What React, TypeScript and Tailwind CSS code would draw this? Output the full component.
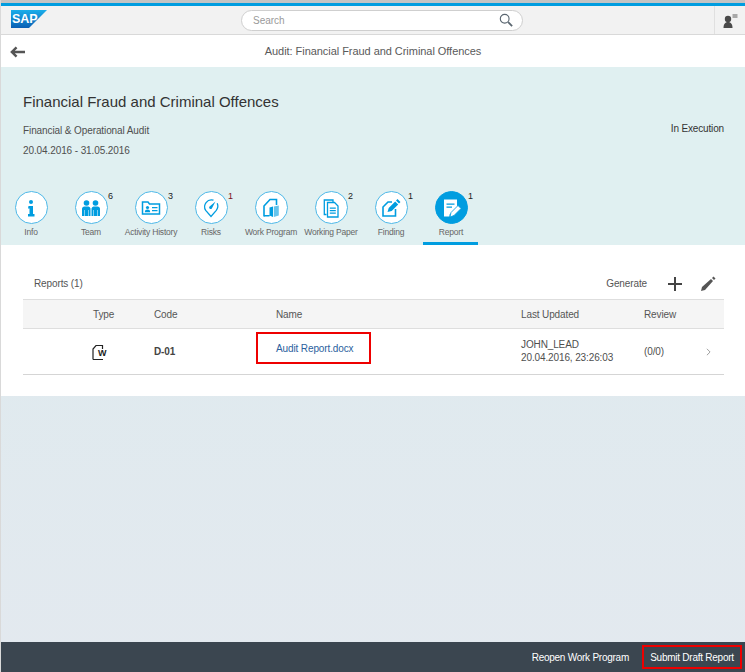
import type { ReactNode } from "react";

const Ring = ({ d, active }: { d: ReactNode; active?: boolean }) => (
  <div
    className={`flex h-[33px] w-[33px] shrink-0 items-center justify-center rounded-full border ${
      active ? "border-[#009de0] bg-[#009de0] text-white" : "border-[#4db8e8] bg-white text-[#009de0]"
    }`}
  >
    <svg viewBox="0 0 20 20" className="h-[20px] w-[20px]" fill="currentColor">
      {d}
    </svg>
  </div>
);

const tabs: { label: string; count?: string; countColor?: string; icon: ReactNode }[] = [
  {
    label: "Info",
    icon: (
      <>
        <circle cx="10" cy="4" r="2" />
        <path d="M7.500 8h4.500v8h1.500v2.500h-6.500V16h1.500v-5.500h-1.500z" />
      </>
    ),
  },
  {
    label: "Team",
    count: "6",
    icon: (
      <>
        <circle cx="5.500" cy="5" r="2.800" />
        <circle cx="14.500" cy="5" r="2.800" />
        <path d="M1 10.500A2.500 2.500 0 0 1 3.500 8.500h4A2.500 2.500 0 0 1 9.500 10.500V18H8v-6h-.5v6h-4v-6H3v6H1zM10.500 10.500a2.500 2.500 0 0 1 2-2h4a2.500 2.500 0 0 1 2.500 2V18h-2v-6h-.5v6h-4v-6H12v6h-1.500z" />
      </>
    ),
  },
  {
    label: "Activity History",
    count: "3",
    icon: (
      <>
        <path d="M1.500 16V4h5.500l1.500 2h10v10z" fill="none" stroke="currentColor" strokeWidth="1.500" />
        <circle cx="6.500" cy="9.500" r="1.600" />
        <path d="M3.800 14.200c0-2 1.200-2.700 2.700-2.700s2.700.7 2.700 2.700zM11 9h5.500v1.300H11zM11 12h5.500v1.300H11z" />
      </>
    ),
  },
  {
    label: "Risks",
    count: "1",
    countColor: "text-[#7a1020]",
    icon: (
      <>
        <path
          d="M12.500 2.200A6.800 6.800 0 0 0 4.700 12.300L10 18.500l5.300-6.200a6.800 6.800 0 0 0 .9-7"
          fill="none"
          stroke="currentColor"
          strokeWidth="1.300"
        />
        <path d="M14.500 3.500L8.300 8.700a1.600 1.600 0 0 0 2.400 2z" />
      </>
    ),
  },
  {
    label: "Work Program",
    icon: (
      <>
        <path d="M3 18.500V8l6-6.500h6.500v5.500" fill="none" stroke="currentColor" strokeWidth="1.600" />
        <path d="M3 18.500V17h5.500v1.500zM8.500 9.500l3.500-1v10.500l-3.500-1.500z" />
        <path d="M12.800 8.500l5-1v10l-5 1.500z" opacity=".6" />
      </>
    ),
  },
  {
    label: "Working Paper",
    count: "2",
    icon: (
      <>
        <path d="M5.500 16.500H3.300V2h8.700v2" fill="none" stroke="currentColor" strokeWidth="1.300" />
        <path d="M6.500 4.500h7l3.500 3.500v11H6.500z" fill="none" stroke="currentColor" strokeWidth="1.300" />
        <path d="M8.800 9.500h6v1.300h-6zM8.800 12h6v1.300h-6zM8.800 14.500h6v1.300h-6z" />
      </>
    ),
  },
  {
    label: "Finding",
    count: "1",
    icon: (
      <>
        <path d="M14.500 11v7H2V9l5-5h4" fill="none" stroke="currentColor" strokeWidth="1.600" />
        <path d="M6.500 14l1.200-4 6.500-6.500 3 3-6.500 6.500zM15 2.500L16.500 1 19.500 4 18 5.500z" />
      </>
    ),
  },
  {
    label: "Report",
    count: "1",
    icon: (
      <>
        <path d="M3 1.500h13v7.500l-7.500 7.500v2H3z" />
        <path d="M5.500 5.500h8v1.200h-8zM5.500 8.500h5.500v1.200H5.500z" fill="#009de0" />
        <path d="M9 19l1-4.500 7-7 3 3-7 7z" stroke="#009de0" strokeWidth="0.800" />
      </>
    ),
  },
];

const gridCols = "grid grid-cols-[61px_122px_245px_123px_1fr] items-center pl-[70px]";

export default function App() {
  return (
    <div
      className="flex h-[672px] w-[745px] flex-col overflow-hidden border-l border-[#d9d9d9] bg-[linear-gradient(#dcebee,#e3e9ef)] text-[#4f4f4f]"
      style={{ fontFamily: '"Liberation Sans", Arial, sans-serif' }}
    >
      <div className="h-[3px] shrink-0 bg-[#c4c4c4]" />
      <div className="h-[3px] shrink-0 bg-[#009de0]" />

      {/* shell bar */}
      <header className="flex h-[29px] shrink-0 items-center border-b border-[#d9d9d9] bg-[#f2f2f2]">
        <div className="mt-[-3px] w-[240px] shrink-0 pl-[10px]">
          <svg viewBox="0 0 36 18" className="h-[18px] w-[36px]">
            <defs>
              <linearGradient id="sapBlue" x1="0" y1="0" x2="0" y2="1">
                <stop offset="0" stopColor="#1aaeea" />
                <stop offset="1" stopColor="#0a5fb4" />
              </linearGradient>
            </defs>
            <path d="M0 0h36L18 18H0z" fill="url(#sapBlue)" />
            <text x="1" y="13" fontSize="12.500" fontWeight="700" fill="#fff" fontFamily="Liberation Sans">
              SAP
            </text>
          </svg>
        </div>
        <div className="flex h-[21px] w-[282px] items-center justify-between rounded-full border border-[#cfcfcf] bg-white pl-[11px] pr-[9px]">
          <span className="text-[10px] text-[#9a9a9a]">Search</span>
          <svg viewBox="0 0 16 16" className="h-[14px] w-[14px]" fill="none" stroke="#5a6670" strokeWidth="1.300">
            <circle cx="6.500" cy="6.500" r="5" />
            <path d="M10.500 10.500l4.500 4.500" strokeWidth="2" />
          </svg>
        </div>
        <div className="ml-auto flex h-full w-[31px] items-center justify-center border-l border-[#e0e0e0]">
          <svg viewBox="0 0 16 16" className="h-[16px] w-[16px]" fill="#4a4a4a">
            <circle cx="6" cy="7" r="3.200" />
            <path d="M1.500 16c0-3.500 1.500-6 4.500-6s4.500 2.500 4.500 6z" />
            <path d="M10.500 2h5v4h-5z" fill="#a8a8a8" />
          </svg>
        </div>
      </header>

      {/* title bar */}
      <div className="relative flex h-[32px] shrink-0 items-center justify-center bg-white pt-px">
        <svg viewBox="0 0 16 12" className="absolute left-[9px] h-[12px] w-[15px]" fill="none" stroke="#555" strokeWidth="2.600">
          <path d="M16 6H2M7 1L2 6l5 5" />
        </svg>
        <span className="text-[11px] tracking-[-0.05px] text-[#5a5a5a]">Audit: Financial Fraud and Criminal Offences</span>
      </div>

      {/* object header */}
      <section className="h-[178px] shrink-0 bg-[#e0f0f1]">
        <div className="flex justify-between pl-[22px] pr-[21px] pt-[25px]">
          <div>
            <h1 className="text-[15px] leading-5 text-[#333]">Financial Fraud and Criminal Offences</h1>
            <p className="mt-[11px] text-[10px] leading-4 tracking-[-0.1px]">Financial &amp; Operational Audit</p>
            <p className="mt-[4px] text-[10px] leading-4 tracking-[-0.1px]">20.04.2016 - 31.05.2016</p>
          </div>
          <span className="mt-[27px] text-[10px] leading-5 tracking-[-0.15px] text-[#333]">In Execution</span>
        </div>
        <nav className="mt-[32px] flex">
          {tabs.map((t) => (
            <div key={t.label} className="relative flex h-[54px] w-[60px] flex-col items-center">
              <Ring d={t.icon} active={t.label === "Report"} />
              {t.count && (
                <span
                  className={`absolute left-[47px] top-[-1px] text-[9px] leading-3 ${t.countColor ?? "text-[#222]"}`}
                >
                  {t.count}
                </span>
              )}
              <span className="whitespace-nowrap text-[8.500px] leading-4 tracking-[-0.2px] text-[#666]">{t.label}</span>
              {t.label === "Report" && (
                <div className="absolute bottom-0 left-[2px] h-[3px] w-[55px] bg-[#009de0]" />
              )}
            </div>
          ))}
        </nav>
      </section>

      {/* reports table */}
      <section className="h-[151px] shrink-0 bg-white pl-[22px] pr-[21px] pt-[22px] text-[10px] tracking-[-0.12px]">
        <div className="flex h-[32px] items-center justify-between pt-px">
          <span className="pl-[11px] text-[#555]">Reports (1)</span>
          <div className="flex items-center">
            <span className="text-[#555]">Generate</span>
            <svg viewBox="0 0 16 16" className="ml-[20px] h-[16px] w-[16px]" fill="none" stroke="#444" strokeWidth="2">
              <path d="M8 1v14M1 8h14" />
            </svg>
            <svg viewBox="0 0 16 16" className="ml-[17px] mr-[8px] h-[16px] w-[16px]" fill="#555">
              <path d="M1 15l1-4L11 3l2 2-8 9zM12 2l1.500-1.500 2 2L14 4z" />
            </svg>
          </div>
        </div>
        <div className={`${gridCols} h-[30px] border-y border-[#dedede] bg-[#f5f5f5] text-[#555]`}>
          <span>Type</span>
          <span>Code</span>
          <span>Name</span>
          <span>Last Updated</span>
          <span>Review</span>
        </div>
        <div className={`${gridCols} h-[46px] border-b border-[#d5d5d5]`}>
          <span className="-ml-[1px]">
            <svg viewBox="0 0 16 16" className="h-[16px] w-[16px]" fill="none" stroke="#222" strokeWidth="1.200">
              <path d="M1 15.500V5l3-3.500h6.500V5M11 15.500H1" />
              <text x="6" y="12" fontSize="9" fontWeight="700" fill="#222" stroke="none" fontFamily="Liberation Sans">
                W
              </text>
            </svg>
          </span>
          <span className="font-bold text-[#444]">D-01</span>
          {/* red annotation box around the linked file */}
          <a className="-ml-[20px] mb-[8px] flex h-[32px] w-[115px] items-center border-2 border-[#ee0000] pl-[18px] pt-[2px] text-[#2b5f9e]">
            Audit Report.docx
          </a>
          <span className="mb-[2px] leading-[13px]">
            JOHN_LEAD
            <br />
            20.04.2016, 23:26:03
          </span>
          <span className="flex items-center justify-between pr-[13px]">
            (0/0)
            <svg viewBox="0 0 6 10" className="h-[8px] w-[5px]" fill="none" stroke="#888" strokeWidth="1">
              <path d="M1 1l4 4-4 4" />
            </svg>
          </span>
        </div>
      </section>

      <div className="flex-1" />

      {/* footer */}
      <footer className="flex h-[30px] shrink-0 items-center justify-end bg-[#3b4650] text-[10px] tracking-[-0.25px] text-white">
        <span className="mr-[13px]">Reopen Work Program</span>
        <span className="mr-[3px] flex h-[24px] w-[100px] items-center justify-center border-2 border-[#ee0000]">
          Submit Draft Report
        </span>
      </footer>
    </div>
  );
}
